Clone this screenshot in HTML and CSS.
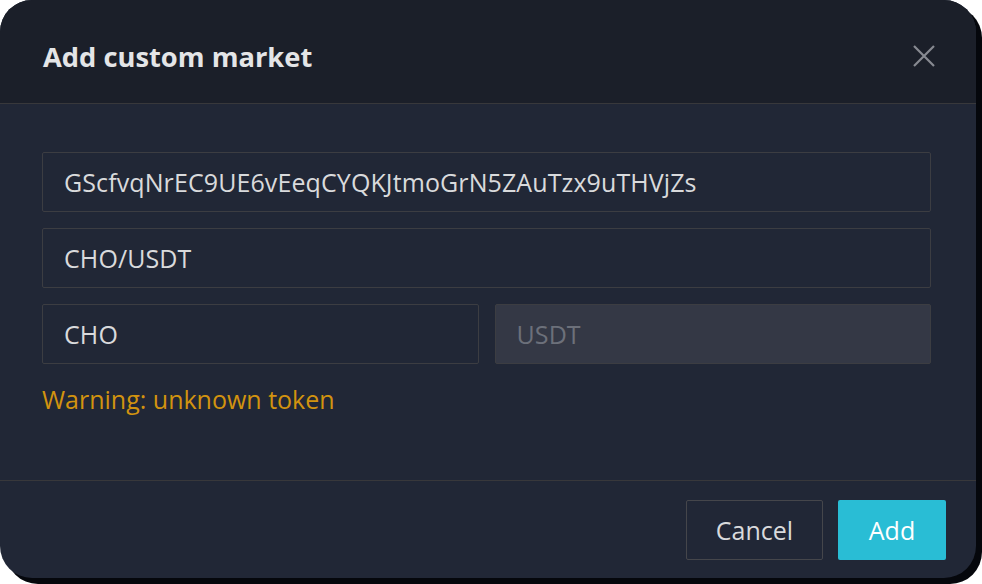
FILE: index.html
```html
<!DOCTYPE html>
<html>
<head>
<meta charset="utf-8">
<link rel="stylesheet" href="styles.css">
</head>
<body>
<div class="dialog">
  <div class="header">
    <div class="title">Add custom market</div>
    <div class="close">
      <svg width="24" height="24" viewBox="0 0 24 24"><path d="M2 2 L22 22 M22 2 L2 22" stroke="#878a91" stroke-width="2.2" fill="none"/></svg>
    </div>
  </div>
  <div class="content">
    <div class="field">GScfvqNrEC9UE6vEeqCYQKJtmoGrN5ZAuTzx9uTHVjZs</div>
    <div class="field">CHO/USDT</div>
    <div class="row">
      <div class="field">CHO</div>
      <div class="field disabled">USDT</div>
    </div>
    <div class="warning">Warning: unknown token</div>
  </div>
  <div class="footer">
    <button class="btn cancel">Cancel</button>
    <button class="btn add">Add</button>
  </div>
</div>
</body>
</html>
```
FILE: styles.css
```css
html, body {
  margin: 0;
  padding: 0;
  background: #ffffff;
}
body {
  width: 982px;
  height: 584px;
  font-family: "Open Sans", "Noto Sans", sans-serif;
}
.dialog {
  width: 976px;
  height: 578px;
  border-radius: 32px;
  background: #212736;
  box-shadow: 6px 6px 0 #05070c;
  overflow: hidden;
  display: flex;
  flex-direction: column;
}
.header {
  box-sizing: border-box;
  height: 104px;
  background: #1b1f29;
  border-bottom: 1px solid #38383b;
  display: flex;
  align-items: center;
  justify-content: space-between;
  padding: 9px 40px 0 43px;
  flex: none;
}
.title {
  color: #e4e5e7;
  font-size: 27.3px;
  font-weight: 700;
}
.close {
  display: flex;
}
.content {
  flex: 1;
  padding: 48px 45px 0 42px;
  display: flex;
  flex-direction: column;
  gap: 16px;
}
.row {
  display: flex;
  gap: 16px;
}
.row .field {
  flex: 1;
}
.field {
  box-sizing: border-box;
  height: 60px;
  border: 1px solid #3c3d42;
  border-radius: 2px;
  padding: 0 21px;
  display: flex;
  align-items: center;
  color: #d9dadc;
  font-size: 25px;
  letter-spacing: 0.1px;
}
.field.disabled {
  background: #343845;
  color: #6c707a;
}
.warning {
  color: #d2930f;
  font-size: 25px;
  margin-top: 2px;
}
.footer {
  box-sizing: border-box;
  height: 98px;
  border-top: 1px solid #38383b;
  flex: none;
  display: flex;
  justify-content: flex-end;
  align-items: flex-start;
  padding: 19px 30px 0 0;
  gap: 15px;
}
.btn {
  height: 60px;
  font-family: "Open Sans", "Noto Sans", sans-serif;
  font-size: 25px;
  border-radius: 2px;
  cursor: pointer;
}
.cancel {
  width: 137px;
  background: transparent;
  border: 1px solid #45464b;
  color: #d9dadc;
}
.add {
  width: 108px;
  background: #29bdd5;
  border: none;
  color: #ffffff;
}
```
